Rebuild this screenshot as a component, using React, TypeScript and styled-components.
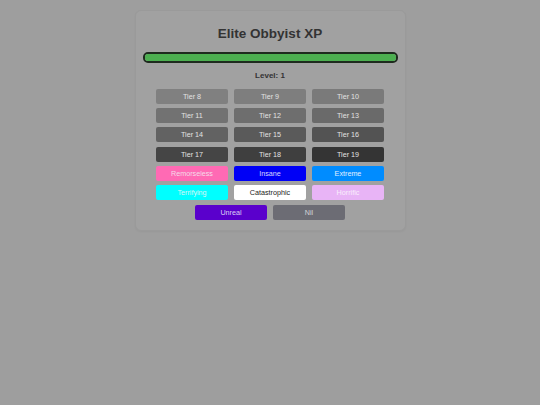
import * as React from 'react';
import styled, { createGlobalStyle } from 'styled-components';

const GlobalStyle = createGlobalStyle`
    html, body {
        margin: 0;
        padding: 0;
        background: #9e9e9e;
        font-family: "Liberation Sans", Arial, sans-serif;
    }
`;

interface Rank {
    label: string;
    bg: string;
    color?: string;
}

const ranks: Rank[] = [
    { label: 'Tier 8', bg: '#808080' },
    { label: 'Tier 9', bg: '#7e7e7e' },
    { label: 'Tier 10', bg: '#7a7a7a' },
    { label: 'Tier 11', bg: '#727272' },
    { label: 'Tier 12', bg: '#6e6e6e' },
    { label: 'Tier 13', bg: '#6a6a6a' },
    { label: 'Tier 14', bg: '#626262' },
    { label: 'Tier 15', bg: '#5a5a5a' },
    { label: 'Tier 16', bg: '#535353' },
    { label: 'Tier 17', bg: '#454545' },
    { label: 'Tier 18', bg: '#3f3f3f' },
    { label: 'Tier 19', bg: '#343434' },
    { label: 'Remorseless', bg: '#ff6ab4', color: '#f6dcea' },
    { label: 'Insane', bg: '#0000f6', color: '#d8d8ff' },
    { label: 'Extreme', bg: '#008cff', color: '#e4f0ff' },
    { label: 'Terrifying', bg: '#00ffff', color: '#dcf6f6' },
    { label: 'Catastrophic', bg: '#ffffff', color: '#222222' },
    { label: 'Horrific', bg: '#e8b4f6', color: '#f8eefc' },
    { label: 'Unreal', bg: '#5a00cc', color: '#dcd0f4' },
    { label: 'Nil', bg: '#6c6c74', color: '#d4d4d8' },
];

export default function App() {
    return (
        <>
            <GlobalStyle />
            <Page>
                <Card>
                    <Title>Elite Obbyist XP</Title>
                    <Bar>
                        <Fill style={{ width: '100%' }} />
                    </Bar>
                    <Level>Level: 1</Level>
                    <Buttons>
                        {ranks.map((r) => (
                            <RankButton key={r.label} $bg={r.bg} $color={r.color}>
                                {r.label}
                            </RankButton>
                        ))}
                    </Buttons>
                </Card>
            </Page>
        </>
    );
}

const Page = styled.div`
    width: 540px;
    height: 405px;
    display: flex;
    justify-content: center;
    align-items: flex-start;
    padding-top: 10px;
    box-sizing: border-box;
`;

const Card = styled.div`
    width: 271px;
    box-sizing: border-box;
    padding: 15px 7px 10px;
    background: #a1a1a1;
    border: 1px solid #9a9a9a;
    border-radius: 6px;
    box-shadow: 0 1px 2px rgba(0, 0, 0, 0.04);
    display: flex;
    flex-direction: column;
    align-items: center;
`;

const Title = styled.div`
    font-size: 13.5px;
    line-height: 16px;
    font-weight: bold;
    color: #333;
    margin-bottom: 10px;
`;

const Bar = styled.div`
    width: 100%;
    height: 10.5px;
    box-sizing: border-box;
    border: 2px solid #1e2a1e;
    border-radius: 5px;
    background: #777;
    overflow: hidden;
`;

const Fill = styled.div`
    height: 100%;
    background: #4caf50;
`;

const Level = styled.div`
    margin-top: 8px;
    font-size: 8px;
    line-height: 9px;
    font-weight: bold;
    color: #333;
`;

const Buttons = styled.div`
    margin-top: 9px;
    width: 228px;
    display: flex;
    flex-wrap: wrap;
    justify-content: center;
    gap: 4.4px 6px;
`;

const RankButton = styled.button<{ $bg: string; $color?: string }>`
    width: 72px;
    height: 15px;
    padding: 0;
    border: none;
    border-radius: 2px;
    background: ${(p) => p.$bg};
    color: ${(p) => p.$color || '#e2e2e2'};
    font-family: "Liberation Sans", Arial, sans-serif;
    font-size: 7.2px;
    line-height: 15px;
    cursor: pointer;
`;
